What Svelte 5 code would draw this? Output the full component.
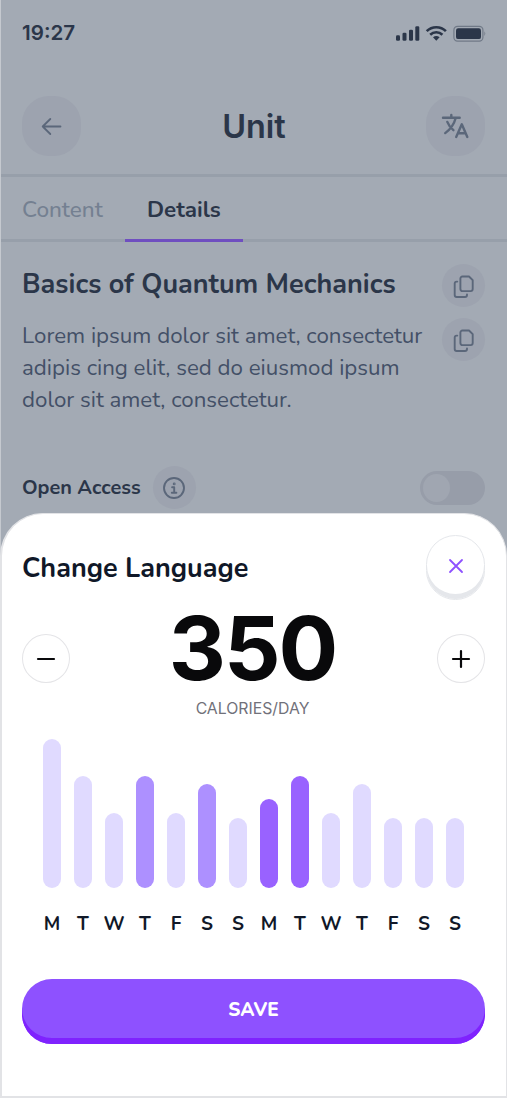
<script>
	let calories = $state(350);
	let openAccess = $state(false);

	const bars = [
		{ day: 'M', height: 149, tone: 'light' },
		{ day: 'T', height: 112, tone: 'light' },
		{ day: 'W', height: 75, tone: 'light' },
		{ day: 'T', height: 112, tone: 'medium' },
		{ day: 'F', height: 75, tone: 'light' },
		{ day: 'S', height: 104, tone: 'medium' },
		{ day: 'S', height: 70.5, tone: 'light' },
		{ day: 'M', height: 89, tone: 'strong' },
		{ day: 'T', height: 112, tone: 'strong' },
		{ day: 'W', height: 75, tone: 'light' },
		{ day: 'T', height: 104, tone: 'light' },
		{ day: 'F', height: 70.5, tone: 'light' },
		{ day: 'S', height: 70.5, tone: 'light' },
		{ day: 'S', height: 70.5, tone: 'light' }
	];
</script>

{#snippet copyIcon()}
	<svg width="22" height="24" viewBox="0 0 22 24" fill="none" stroke="currentColor" stroke-width="1.9" stroke-linecap="round" stroke-linejoin="round">
		<path d="M9.4 1.5H16L19.7 5.2V14.1A2 2 0 0 1 17.7 16.1H9.4A2 2 0 0 1 7.4 14.1V3.5A2 2 0 0 1 9.4 1.5Z" />
		<path d="M4.3 6.6H3.7A2 2 0 0 0 1.7 8.6V20A2 2 0 0 0 3.7 22H12A2 2 0 0 0 14 20V19.4" />
	</svg>
{/snippet}

<div class="screen">
	<div class="status">
		<span class="time">19:27</span>
		<svg width="91" height="18" viewBox="0 0 91 18" fill="currentColor">
			<rect x="1" y="11.3" width="4" height="5.4" rx="1.3" />
			<rect x="7.5" y="8.7" width="4" height="8" rx="1.3" />
			<rect x="14" y="5.7" width="4" height="11" rx="1.3" />
			<rect x="20.3" y="2.2" width="4" height="14.5" rx="1.3" />
			<g fill="none" stroke="currentColor" stroke-width="2.6">
				<path d="M31.7 7.1C37 1.9 45.6 1.9 50.9 7.1" />
				<path d="M35.2 10.7C38.6 7.4 44 7.4 47.4 10.7" />
			</g>
			<path d="M38 13.3Q41.3 10.6 44.6 13.3L41.3 16.7Z" />
			<rect x="58.9" y="2.3" width="29" height="14.8" rx="3.6" fill="none" stroke="currentColor" stroke-opacity=".42" stroke-width="1.2" />
			<rect x="61" y="4.3" width="25" height="10.8" rx="2.2" />
			<path d="M89 7.2Q91.7 9.6 89 12Z" opacity=".25" />
		</svg>
	</div>

	<header class="header">
		<button class="square" aria-label="Back">
			<svg width="22" height="20" viewBox="0 0 22 20" fill="none" stroke="currentColor" stroke-width="1.8" stroke-linecap="round" stroke-linejoin="round">
				<path d="M19.5 10.5H1.7M9.3 3L1.7 10.5L9.3 18" />
			</svg>
		</button>
		<h1>Unit</h1>
		<button class="square" aria-label="Language">
			<svg width="30" height="28" viewBox="0 0 30 28" fill="none" stroke="currentColor" stroke-width="2.4" stroke-linecap="round" stroke-linejoin="round">
				<path d="M3 5.7H19.7M11.3 3V5.5M15.7 6C14.2 11.8 10.4 17.3 5.2 21.1M7.3 9.9C8.6 13.3 10.8 16 13.4 18.2" />
				<path d="M16.2 24.9L21.8 12.3L27.3 24.9M18 21.3H25.7" />
			</svg>
		</button>
	</header>

	<nav class="tabs">
		<span class="tab">Content</span>
		<span class="tab active">Details</span>
	</nav>

	<section class="details">
		<div class="copy">
			<h2>Basics of Quantum Mechanics</h2>
			<p>
				Lorem ipsum dolor sit amet, consectetur<br />
				adipis cing elit, sed do eiusmod ipsum<br />
				dolor sit amet, consectetur.
			</p>
		</div>
		<div class="copy-buttons">
			<button class="round" aria-label="Copy title">{@render copyIcon()}</button>
			<button class="round" aria-label="Copy description">{@render copyIcon()}</button>
		</div>
	</section>

	<div class="access">
		<span class="access-label">Open Access</span>
		<button class="round" aria-label="Info">
			<svg width="24" height="24" viewBox="0 0 24 24" fill="none" stroke="currentColor" stroke-width="1.9" stroke-linecap="round" stroke-linejoin="round">
				<circle cx="12" cy="12" r="10" />
				<path d="M10.1 11.3H12.2V16.6M9.8 16.7H14.4" />
				<circle cx="12.2" cy="7.9" r=".5" />
			</svg>
		</button>
		<button class="toggle" class:on={openAccess} aria-label="Open access" onclick={() => (openAccess = !openAccess)}>
			<span class="knob"></span>
		</button>
	</div>

	<div class="sheet">
		<div class="sheet-header">
			<h2>Change Language</h2>
			<button class="close" aria-label="Close">
				<svg width="16" height="16" viewBox="0 0 16 16" fill="none" stroke="currentColor" stroke-width="1.8" stroke-linecap="round">
					<path d="M2 2L14 14M14 2L2 14" />
				</svg>
			</button>
		</div>

		<div class="counter">
			<button class="step" aria-label="Decrease" onclick={() => (calories -= 10)}>
				<svg width="20" height="20" viewBox="0 0 20 20" stroke="currentColor" stroke-width="2.2" stroke-linecap="round">
					<path d="M2 10H18" />
				</svg>
			</button>
			<div class="amount">
				<div class="value">{calories}</div>
				<div class="unit">CALORIES/DAY</div>
			</div>
			<button class="step" aria-label="Increase" onclick={() => (calories += 10)}>
				<svg width="20" height="20" viewBox="0 0 20 20" stroke="currentColor" stroke-width="2.2" stroke-linecap="round">
					<path d="M2 10H18M10 2V18" />
				</svg>
			</button>
		</div>

		<div class="chart">
			{#each bars as bar}
				<div class="column">
					<div class="bar {bar.tone}" style="height: {bar.height}px"></div>
					<span class="day">{bar.day}</span>
				</div>
			{/each}
		</div>

		<button class="save">SAVE</button>
	</div>
</div>

<style>
	:global(body) {
		margin: 0;
		background: #a3aab4;
	}

	.screen {
		position: relative;
		box-sizing: border-box;
		height: 1098px;
		padding-left: 1px;
		overflow: hidden;
		background: #a3aab4;
		box-shadow: inset 1px 0 #c5c9cf;
		color: #2b3649;
		font-family: Nunito, Lato, sans-serif;
	}

	h1,
	h2,
	p {
		margin: 0;
	}

	button {
		display: flex;
		align-items: center;
		justify-content: center;
		flex: none;
		box-sizing: border-box;
		padding: 0;
		border: none;
		color: inherit;
		font-family: inherit;
		cursor: pointer;
	}

	.status {
		display: flex;
		justify-content: space-between;
		align-items: center;
		height: 66px;
		padding: 0 21px;
	}

	.time {
		font: 600 20.6px/24px Inter, sans-serif;
	}

	.header {
		display: flex;
		justify-content: space-between;
		align-items: center;
		box-sizing: border-box;
		height: 111px;
		padding: 11px 22px 0 21px;
		border-bottom: 3px solid #979faa;
	}

	.header h1 {
		padding: 1px 0 0 1px;
		font: 600 32.4px/41px Inter, sans-serif;
	}

	.square {
		width: 59px;
		height: 60px;
		border-radius: 27px;
		background: #9da3af;
		color: #5b677a;
	}

	.tabs {
		display: flex;
		height: 62px;
		border-bottom: 3px solid #979faa;
	}

	.tab {
		box-sizing: border-box;
		width: 124px;
		padding-left: 21px;
		font-size: 22.5px;
		font-weight: 500;
		line-height: 66px;
		color: #748091;
	}

	.tab.active {
		width: 118px;
		height: 65px;
		padding-left: 22px;
		border-bottom: 3px solid #6f4fc0;
		font-size: 22.4px;
		font-weight: 700;
		color: #2b3649;
	}

	.details {
		display: flex;
		justify-content: space-between;
		box-sizing: border-box;
		height: 224px;
		padding: 22px 22px 0 21px;
	}

	.details h2 {
		font-size: 27px;
		line-height: 42px;
		white-space: nowrap;
	}

	.details p {
		margin-top: 14px;
		font-size: 22.3px;
		line-height: 32px;
		color: #435067;
		white-space: nowrap;
	}

	.copy-buttons {
		display: flex;
		flex-direction: column;
		gap: 11px;
	}

	.copy-buttons svg {
		margin-top: 2px;
	}

	.round {
		width: 43px;
		height: 43px;
		border-radius: 50%;
		background: #9da3af;
		color: #5b677a;
	}

	.access {
		display: flex;
		align-items: center;
		height: 43px;
		padding: 0 22px 0 21px;
	}

	.access-label {
		width: 130.5px;
		font-size: 19.9px;
		font-weight: 700;
		white-space: nowrap;
	}

	.toggle {
		justify-content: flex-start;
		width: 65px;
		height: 34px;
		margin-left: auto;
		padding: 0 3px;
		border-radius: 17px;
		background: #979da9;
	}

	.toggle.on {
		justify-content: flex-end;
	}

	.knob {
		width: 27px;
		height: 28px;
		border-radius: 50%;
		background: #a0a6b1;
	}

	.sheet {
		position: absolute;
		left: 0;
		right: 0;
		top: 513px;
		bottom: 0;
		box-sizing: border-box;
		padding: 21px 21px 0 20px;
		border: 1px solid #e2e3e6;
		border-width: 1px 1px 2px 2px;
		border-radius: 43px 43px 0 0;
		background: #fff;
		color: #101828;
	}

	.sheet-header {
		display: flex;
		justify-content: space-between;
		align-items: center;
		height: 65px;
	}

	.sheet-header h2 {
		padding-top: 1px;
		font-size: 27px;
		line-height: 37px;
	}

	.close {
		width: 59px;
		height: 65px;
		padding-bottom: 3px;
		border: 1px solid #e5e7eb;
		border-radius: 30px;
		background: #fff;
		box-shadow: inset 0 -5px #e5e7eb;
		color: #8e51ff;
	}

	.counter {
		display: flex;
		justify-content: space-between;
		height: 139px;
		color: #09090b;
		font-family: Inter, sans-serif;
	}

	.step {
		width: 48px;
		height: 49px;
		margin-top: 34px;
		border: 1px solid #e4e4e7;
		border-radius: 50%;
		background: #fff;
	}

	.amount {
		text-align: center;
	}

	.value {
		margin: 4px 2px 0 0;
		font-size: 88.6px;
		font-weight: 700;
		line-height: 88px;
		letter-spacing: -2px;
	}

	.unit {
		margin: 6px 2px 0 0;
		font-size: 15.8px;
		line-height: 22px;
		color: #71717a;
	}

	.chart {
		display: flex;
		justify-content: center;
		height: 240px;
	}

	.column {
		display: flex;
		flex-direction: column;
		align-items: center;
		justify-content: flex-end;
		width: 31px;
		height: 196px;
	}

	.bar {
		width: 18px;
		border-radius: 9px;
	}

	.bar.light {
		background: #e0daff;
	}

	.bar.medium {
		background: #ad90ff;
	}

	.bar.strong {
		background: #9962ff;
	}

	.day {
		height: 23px;
		margin-top: 24px;
		font-size: 19px;
		font-weight: 700;
		line-height: 24px;
	}

	.save {
		width: 100%;
		height: 65px;
		padding-bottom: 4px;
		border-radius: 30px;
		background: #8e51ff;
		box-shadow: inset 0 -6px #7f22fe;
		color: #fff;
		font-size: 19px;
		font-weight: 800;
		line-height: 26px;
	}
</style>
